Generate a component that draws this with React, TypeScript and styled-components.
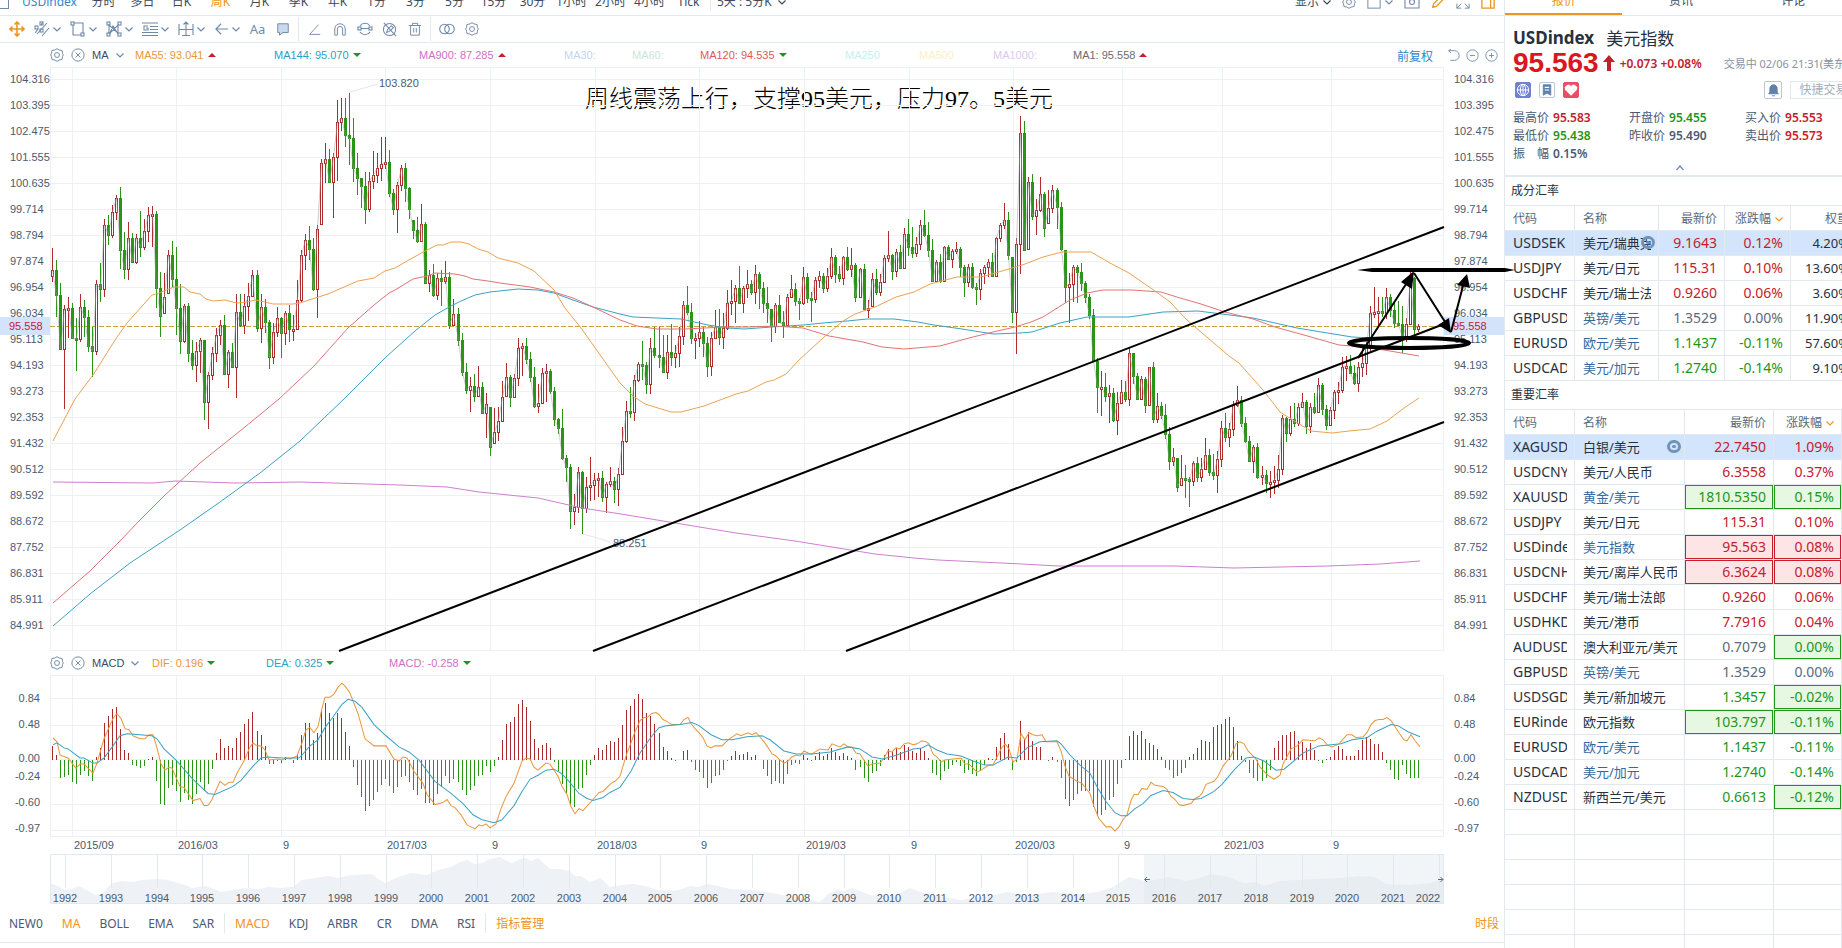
import { ReactNode } from "react";
import styled, { createGlobalStyle, css } from "styled-components";

const GlobalStyle = createGlobalStyle`
    * {
        box-sizing: border-box;
    }
    body {
        margin: 0;
        background: #FFFFFF;
        color: #4a5a70;
        font-family: "Noto Sans", "Noto Sans CJK SC", sans-serif;
        font-size: 12px;
        overflow: hidden;
    }
    button {
        margin: 0;
        padding: 0;
        border: 0;
        background: none;
        color: inherit;
        font: inherit;
        cursor: pointer;
    }
`;

const ORANGE = "#ee9420";
const RED = "#c4202c";
const GREEN = "#1f961a";
const LINE = "#e3e8ee";
const ICON = "#6f8aa8";

type Tone = "up" | "down" | "flat";
const toneColor = { up: RED, down: GREEN, flat: "#5a6a7c" };

const Page = styled.div`
    display: flex;
    width: 100%;
    height: 100vh;
    overflow: hidden;
`;

const Main = styled.main`
    flex: 1;
    min-width: 0;
    display: flex;
    flex-direction: column;
`;

const PeriodBar = styled.nav`
    display: flex;
    align-items: flex-end;
    justify-content: space-between;
    height: 16px;
    padding-bottom: 5px;
    border-bottom: 1px solid ${LINE};
    overflow: hidden;
`;

const Periods = styled.div`
    display: flex;
    align-items: center;
    height: 16px;
`;

const Window = styled.span`
    width: 9px;
    height: 14px;
    border: solid ${ICON};
    border-width: 0 1px 1px 0;
`;

const Symbol = styled.button`
    width: 75px;
    padding-left: 6px;
    color: #2f86cf;
    line-height: 16px;
`;

const Period = styled.button<{ $active?: boolean }>`
    flex: 0 0 39px;
    text-align: center;
    white-space: nowrap;
    line-height: 16px;
    color: ${p => p.$active ? ORANGE : "#3d4a5c"};
`;

const PeriodExtra = styled.button`
    display: flex;
    align-items: center;
    gap: 6px;
    margin-left: 2px;
    padding-left: 6px;
    border-left: 1px solid ${LINE};
    line-height: 16px;
    color: #3d4a5c;
`;

const ViewTools = styled.div`
    display: flex;
    align-items: center;
    height: 16px;
    gap: 11px;
    padding-right: 9px;
    color: ${ICON};
`;

const ViewTool = styled.button<{ $active?: boolean; $label?: boolean }>`
    display: flex;
    align-items: center;
    gap: 4px;
    line-height: 16px;
    color: ${p => p.$active ? ORANGE : p.$label ? "#3d4a5c" : ICON};
`;

const ToolBar = styled.div`
    display: flex;
    align-items: center;
    height: 27px;
    padding-left: 4px;
    border-bottom: 1px solid ${LINE};
    color: ${ICON};
`;

const Tool = styled.button<{ $wide?: boolean; $active?: boolean }>`
    display: flex;
    align-items: center;
    justify-content: center;
    gap: 3px;
    flex: 0 0 ${p => p.$wide ? 36 : 25}px;
    height: 24px;
    font-size: 13px;
    color: ${p => p.$active ? ORANGE : ICON};
`;

const ToolDivider = styled.span`
    width: 1px;
    height: 24px;
    margin: 0 3px;
    background: ${LINE};
`;

const IndicatorRow = styled.div`
    display: flex;
    align-items: center;
    height: 24px;
    padding: 0 6px 0 50px;
    font: 11px "Liberation Sans", sans-serif;
    color: ${ICON};
`;

const IndicatorHead = styled.div<{ $width: number }>`
    display: flex;
    align-items: center;
    gap: 7px;
    width: ${p => p.$width}px;
    > span {
        color: #3d4a5c;
    }
    > button {
        display: flex;
    }
`;

const Reading = styled.span<{ $width: number; $color: string }>`
    display: flex;
    align-items: center;
    gap: 4px;
    flex: 0 0 ${p => p.$width}px;
    white-space: nowrap;
    color: ${p => p.$color};
`;

const Arrow = styled.i<{ $up?: boolean }>`
    border: 4px solid transparent;
    ${p => p.$up
        ? css`border-top: 0; border-bottom-color: ${RED};`
        : css`border-bottom: 0; border-top-color: ${GREEN};`}
`;

const RowEnd = styled.div`
    display: flex;
    align-items: center;
    gap: 6px;
    margin-left: auto;
    > a {
        margin-right: 8px;
        color: #2f86cf;
        font-family: "Noto Sans CJK SC", sans-serif;
        font-size: 12px;
        text-decoration: none;
    }
    > button {
        display: flex;
    }
`;

const ChartRow = styled.div<{ $height: number }>`
    display: grid;
    grid-template-columns: 50px 1fr 60px;
    height: ${p => p.$height}px;
    font: 11px "Liberation Sans", sans-serif;
    color: #4a5a70;
`;

const Canvas = styled.svg`
    position: relative;
    z-index: 2;
    display: block;
    width: 100%;
    height: 100%;
    overflow: visible;
    pointer-events: none;
`;

const Axis = styled.div<{ $right?: boolean; $top: number }>`
    position: relative;
    display: flex;
    flex-direction: column;
    padding-top: ${p => p.$top}px;
    text-align: ${p => p.$right ? "left" : "right"};
`;

const AxisLabel = styled.span<{ $height: number }>`
    height: ${p => p.$height}px;
    padding: 0 10px;
    line-height: 18px;
`;

const LastPrice = styled.b`
    position: absolute;
    top: 250px;
    left: 0;
    right: 0;
    padding: 0 9px;
    background: #d2e3fb;
    color: ${RED};
    font-weight: normal;
    line-height: 18px;
`;

const PlotWrap = styled.div`
    position: relative;
`;

const Note = styled.p`
    position: absolute;
    top: 14px;
    left: 535px;
    margin: 0;
    white-space: nowrap;
    font: 300 24px/36px "Liberation Serif", "Noto Sans CJK SC", serif;
    color: #000000;
`;

const Dates = styled.div`
    position: relative;
    height: 19px;
    margin: 0 60px 0 50px;
    font: 11px/18px "Liberation Sans", sans-serif;
`;

const Tick = styled.span<{ $center?: boolean }>`
    position: absolute;
    bottom: 0;
    transform: ${p => p.$center ? "translateX(-50%)" : "none"};
    padding-left: ${p => p.$center ? 0 : 2}px;
`;

const Overview = styled.div`
    position: relative;
    height: 50px;
    margin: 0 60px 0 50px;
    font: 11px/12px "Liberation Sans", sans-serif;
`;

const StudyTabs = styled.nav`
    display: flex;
    align-items: center;
    gap: 19px;
    height: 39px;
    padding: 0 5px 0 9px;
    border-bottom: 1px solid ${LINE};
    > button:last-child {
        margin-left: auto;
    }
`;

const StudyTab = styled.button<{ $active?: boolean }>`
    color: ${p => p.$active ? ORANGE : "#4a5a70"};
`;

const TabDivider = styled.span`
    width: 1px;
    height: 20px;
    margin: 0 -9px;
    background: ${LINE};
`;

const Side = styled.aside`
    flex: 0 0 338px;
    display: flex;
    flex-direction: column;
    border-left: 1px solid ${LINE};
    overflow: hidden;
    > * {
        width: 352px;
        flex-shrink: 0;
    }
`;

const SideTabs = styled.nav`
    display: flex;
    align-items: flex-end;
    height: 16px;
    border-bottom: 1px solid ${LINE};
    overflow: hidden;
`;

const SideTab = styled.button<{ $active?: boolean }>`
    flex: 1;
    height: 22px;
    padding-bottom: 4px;
    line-height: 16px;
    color: ${p => p.$active ? ORANGE : "#3d4a5c"};
    border-bottom: 2px solid ${p => p.$active ? ORANGE : "transparent"};
`;

const Dot = styled.i`
    display: inline-block;
    width: 4px;
    height: 4px;
    margin-left: 6px;
    vertical-align: 5px;
    border-radius: 50%;
    background: ${RED};
`;

const Quote = styled.section`
    height: 161px;
    padding: 9px 0 0 8px;
    border-bottom: 2px solid ${LINE};
`;

const QuoteTitle = styled.h1`
    display: flex;
    align-items: center;
    gap: 12px;
    margin: 0;
    height: 24px;
    font-size: 17px;
    color: #263140;
    > span {
        font-weight: 400;
    }
`;

const QuotePrice = styled.div`
    display: flex;
    align-items: center;
    height: 28px;
    color: ${RED};
    font-weight: 600;
    white-space: nowrap;
    > strong {
        color: #d8181e;
        font: bold 28px/28px "Liberation Sans", sans-serif;
    }
    > svg {
        margin: 0 5px 0 4px;
    }
    > small {
        margin-left: 22px;
        font-size: 11px;
        font-weight: 400;
        color: #8593a5;
    }
`;

const QuoteTools = styled.div`
    display: flex;
    align-items: center;
    gap: 8px;
    height: 26px;
    padding-left: 2px;
`;

const Chip = styled.button<{ $fill?: string }>`
    display: flex;
    align-items: center;
    justify-content: center;
    width: 16px;
    height: 16px;
    border-radius: 2px;
    border: 1px solid ${p => p.$fill ?? "#b9c7d8"};
    background: ${p => p.$fill ?? "#FFFFFF"};
    color: ${p => p.$fill ? "#FFFFFF" : "#5f80a8"};
    > svg {
        flex-shrink: 0;
    }
`;

const Bell = styled(Chip)`
    width: 18px;
    height: 18px;
    margin-left: auto;
`;

const Trade = styled.button`
    width: 67px;
    height: 18px;
    border: 1px solid ${LINE};
    color: #a4aebb;
    line-height: 16px;
`;

const Stats = styled.dl`
    display: grid;
    grid-template-columns: repeat(3, 116px);
    grid-auto-rows: 18px;
    margin: 6px 0 0;
    line-height: 18px;
    > div {
        display: flex;
        gap: 4px;
    }
    dt {
        white-space: pre;
    }
    dd {
        margin: 0;
        font-weight: 600;
    }
`;

const StatValue = styled.dd<{ $color: string }>`
    color: ${p => p.$color};
`;

const Fold = styled.button`
    display: block;
    margin: 0 auto;
    height: 10px;
    padding-right: 10px;
    color: ${ICON};
    > svg {
        display: block;
    }
`;

const SectionTitle = styled.h2`
    margin: 0;
    padding-left: 6px;
    height: 28px;
    font-size: 12px;
    font-weight: 400;
    line-height: 28px;
    color: #263140;
`;

const Table = styled.table`
    table-layout: fixed;
    border-collapse: separate;
    border-spacing: 0;
    color: #263140;
    font-size: 14px;
    border-top: 1px solid ${LINE};
`;

const Th = styled.th<{ $right?: boolean }>`
    height: 25px;
    padding: 0 7px 0 8px;
    border: solid ${LINE};
    border-width: 0 1px 1px 0;
    font-size: 12px;
    font-weight: 400;
    color: #5a6a7c;
    text-align: ${p => p.$right ? "right" : "left"};
    white-space: nowrap;
    > svg {
        margin-left: 4px;
        color: ${ORANGE};
    }
`;

const Tr = styled.tr<{ $active?: boolean }>`
    background: ${p => p.$active ? "#d2e5fc" : "transparent"};
`;

const Td = styled.td<{ $right?: boolean; $color?: string; $box?: string; $small?: boolean }>`
    position: relative;
    height: 25px;
    padding: 0 7px 0 8px;
    border: solid ${LINE};
    border-width: 0 1px 1px 0;
    line-height: 20px;
    color: ${p => p.$color ?? "inherit"};
    text-align: ${p => p.$right ? "right" : "left"};
    font-size: ${p => p.$small ? 13 : 14}px;
    ${p => p.$box && css`
        background: ${p.$box === GREEN ? "#e6f8e2" : "#fde5e5"};
        box-shadow: inset 0 0 0 1px ${p.$box};
    `}
`;

const Clip = styled.div`
    overflow: hidden;
    white-space: nowrap;
`;

const Eye = styled.span`
    position: absolute;
    top: 5px;
    right: 3px;
    width: 14px;
    height: 13px;
    border: 3px solid #7292b8;
    border-radius: 7px;
    &::after {
        content: "";
        position: absolute;
        top: 2px;
        left: 2px;
        width: 4px;
        height: 3px;
        border-radius: 2px;
        background: #7292b8;
    }
`;

const Glyph = ({ size = 14, children }: { size?: number; children: ReactNode }) => (
    <svg width={size} height={size} viewBox="0 0 16 16" fill="none" stroke="currentColor" strokeWidth="1.1">{children}</svg>
);
const Chevron = ({ up }: { up?: boolean }) => (
    <svg width="8" height="8" viewBox="0 0 8 8" fill="none" stroke="currentColor" strokeWidth="1.2">
        <path d={up ? "M0.5 6 L4 2 L7.5 6" : "M0.5 2.5 L4 6 L7.5 2.5"} />
    </svg>
);
const Gear = () => (
    <Glyph>
        <path d="M5.5 2.3 L8 0.8 L10.5 2.3 L13.8 2.8 L14.2 6 L15.2 8 L14.2 10 L13.8 13.2 L10.5 13.7 L8 15.2 L5.5 13.7 L2.2 13.2 L1.8 10 L0.8 8 L1.8 6 L2.2 2.8 Z" />
        <circle cx="8" cy="8" r="2.8" />
    </Glyph>
);
const CloseRound = () => <Glyph><circle cx="8" cy="8" r="7" /><path d="M5.3 5.3 L10.7 10.7 M10.7 5.3 L5.3 10.7" /></Glyph>;

const periods = ["分时", "多日", "日K", "周K", "月K", "季K", "年K", "1分", "3分", "5分", "15分", "30分", "1小时", "2小时", "4小时", "Tick"];

const drawTools: { name: string; icon: ReactNode }[] = [
    { name: "平行线", icon: <Glyph size={16}><path d="M3 13 L13 2 M8 15 L15 7 M1 12 L4 8 M7 4 L9 1" /><rect x="1" y="5" width="3" height="3" /><rect x="6" y="1" width="3" height="3" /><rect x="6" y="8" width="3" height="3" /></Glyph> },
    { name: "矩形", icon: <Glyph size={16}><path d="M4 2 H13 V12 M11 14 H3 V4" /><rect x="1" y="1" width="3" height="3" /><rect x="11" y="12" width="3" height="3" /></Glyph> },
    { name: "形态", icon: <Glyph size={16}><path d="M3 13 V4 L12 12 V4 L3 13 M4 12 L7 5 L12 13" /><rect x="1" y="1" width="3" height="3" /><rect x="12" y="1" width="3" height="3" /><rect x="1" y="12" width="3" height="3" /><rect x="12" y="12" width="3" height="3" /></Glyph> },
    { name: "黄金分割", icon: <Glyph size={16}><path d="M0 2 H16 M8 5.5 H16 M8 8.5 H16 M0 11.500 H16 M0 14.500 H16 M6 5 H2 V9 H6 V7 H4" /></Glyph> },
    { name: "测量", icon: <Glyph size={16}><path d="M1 3 V14 M15 3 V14 M1 8.5 H15 M8 1 V15 M5.500 3.500 L8 1 L10.500 3.500 M4 14.500 H12" /></Glyph> },
    { name: "箭头", icon: <Glyph size={14}><path d="M15 8 H1 M7 2 L1 8 L7 14" strokeWidth="1.3" /></Glyph> },
];

const maReadings = [
    { text: "MA55: 93.041", color: "#e8963c", width: 139, up: true },
    { text: "MA144: 95.070", color: "#2b9fc4", width: 145, up: false },
    { text: "MA900: 87.285", color: "#d06fc8", width: 145, up: true },
    { text: "MA30:", color: "#c3d5ee", width: 68 },
    { text: "MA60:", color: "#c9e6d6", width: 68 },
    { text: "MA120: 94.535", color: "#e25757", width: 145, up: false },
    { text: "MA250", color: "#c4f0f2", width: 74 },
    { text: "MA500", color: "#faeecb", width: 74 },
    { text: "MA1000:", color: "#dccaf0", width: 80 },
    { text: "MA1: 95.558", color: "#6b6b6b", width: 90, up: true },
];
const macdReadings = [
    { text: "DIF: 0.196", color: "#e8963c", width: 114, up: false },
    { text: "DEA: 0.325", color: "#2b9fc4", width: 123, up: false },
    { text: "MACD: -0.258", color: "#d06fc8", width: 120, up: false },
];

const prices = ["104.316", "103.395", "102.475", "101.555", "100.635", "99.714", "98.794", "97.874", "96.954", "96.034", "95.113",
    "94.193", "93.273", "92.353", "91.432", "90.512", "89.592", "88.672", "87.752", "86.831", "85.911", "84.991"];

const dates: [number, string][] = [[72, "2015/09"], [176, "2016/03"], [281, "9"], [385, "2017/03"], [490, "9"], [595, "2018/03"],
    [699, "9"], [804, "2019/03"], [909, "9"], [1013, "2020/03"], [1122, "9"], [1222, "2021/03"], [1331, "9"]];

// gridline position, label, distance to the next label
const macdLevels: [number, string, number][] = [[698, "0.84", 26], [724, "0.48", 34], [758, "0.00", 18], [776, "-0.24", 26], [802, "-0.60", 26], [828, "-0.97", 18]];

// chart coordinates: x runs 50..1444, y runs down the window
const LEFT = 50;
const WIDTH = 1394;
const weekX = (i: number) => Math.floor(52 + i * 4.02) + 0.5;

// weekly bars as "close high low", three units to a pixel, each block with its own origin
const blocks: { origin: number; bars: string }[] = [
    {
        origin: 180,
        bars: `630 564 665,705 600 770,866 670 866,748 735 1047,744 712 833,833 730 838,838 775 932,742 703 845,770 720 832,857 750 875,
872 800 950,672 660 886,686 610 725,496 478 710,525 465 556,455 436 534,415 406 480,570 382 628,626 516 658,533 485 660,
607 520 610,533 522 612,562 453 590,512 478 570,465 442 545,463 438 562,683 453 743,767 637 830,712 640 760,585 570 700,
658 543 680,745 560 825,842 672 883,738 732 848,880 730 905,916 840 930,872 845 965,840 833 940,1025 840 1080,945 937 1107,
880 862 960,825 803 905,795 780 855,943 765 945,875 870 983,920 850 925,757 703 1015,795 703 800,738 703 822,708 668 783,
645 630 712,805 630 815,740 703 848,785 717 820,890 780 926,815 790 913,775 742 832,818 770 893,760 752 855,806 735 846,
808 765 843,720 660 808,585 570 725,540 522 630,566 498 600,688 535 692,508 495 773,310 298 493,298 250 370,366 267 370,
292 280 473,185 120 362,173 114 213,225 114 262,235 98 316,323 173 366,355 278 404,378 355 445,448 337 491,362 337 455,
345 274 388,325 278 368,312 232 364,307 232 328,398 270 412,446 388 464,375 365 520,325 316 392,383 310 425,446 382 478,
510 480 536,544 470 548,492 433 545,668 487 672,645 630 695,706 612 710,655 640 720,662 630 737,650 603 672,795 637 808,
762 717 797,840 745 858`,
    },
    {
        origin: 750,
        bars: `365 248 378,420 338 433,407 382 485,438 372 455,412 348 442,488 395 492,462 430 565,590 470 617,545 475 580,512 470 573,
440 392 515,380 340 437,440 375 470,385 372 443,293 265 408,287 278 378,328 265 343,380 305 395,468 350 473,460 402 490,
370 355 460,362 343 455,422 357 433,508 410 527,533 505 553,625 478 630,650 615 695,782 642 836,770 732 825,665 652 788,
775 663 852,710 680 790,705 622 752,690 670 750,685 668 740,742 662 755,702 697 790,692 650 712,718 680 758,672 655 768,
572 532 675,484 453 578,487 412 503,390 375 512,342 335 397,345 272 390,402 335 432,295 263 433,316 230 325,320 230 355,
365 255 370,305 255 388,322 223 348,308 285 355,258 232 350,165 153 285,185 108 195,265 160 283,265 250 327,245 213 290,
278 232 320,348 262 380,265 245 378,232 180 265,260 178 285,235 190 297`,
    },
    {
        origin: 540,
        bars: `368 330 450,362 300 405,325 315 430,368 258 372,325 318 400,312 270 355,335 300 345,283 255 372,325 275 388,370 307 400,
385 322 430,437 388 485,375 370 460,425 345 430,435 392 475,350 343 438,328 285 350,362 310 378,370 355 420,290 260 375,
355 280 370,358 335 425,300 290 370,288 272 325,325 280 338,287 265 337,230 205 297,282 225 308,293 258 305,232 227 315,
268 202 273,255 205 290,352 250 365,268 265 355,387 252 390,385 360 415,297 280 378,335 268 345,305 282 348,233 225 308,
225 153 245,272 222 300,215 207 292,263 195 268,162 143 268,200 118 227,218 140 235,193 170 232,135 120 210,165 90 172,
210 127 230,302 178 305,247 240 305,303 222 308,200 197 305,237 195 240,212 207 263,208 187 223,260 200 290,307 255 352,
262 253 320,322 250 327,328 310 374,280 268 360,262 255 312,245 238 290,287 220 290,175 170 290,135 130 185,120 68 148,
225 95 240,395 232 428`,
    },
    {
        origin: 300,
        bars: `432 415 762,98 48 522,450 63 453,245 232 448,347 222 360,330 297 405,282 232 335,385 275 410,325 270 370,270 255 340,
322 263 388,447 305 453,560 450 608,552 520 670,500 495 605,515 495 610,548 490 573,590 542 608,645 582 658,782 627 787,
860 775 938,862 812 948,888 818 905,880 855 970,960 865 965,910 875 1005,875 840 912,898 843 905,760 745 918,828 760 852,
897 820 900,838 828 900,915 832 940,802 800 917,957 787 968,918 880 968,945 905 957,1002 912 1018,1083 980 1110,1070 1045 1098,
1160 1075 1175,1133 1065 1155,1137 1095 1195,1143 1130 1220,1088 1082 1158,1132 1070 1145,1107 1075 1145,1065 1015 1108,1115 1048 1128,1125 1063 1140,
1078 1052 1180,985 962 1100,1010 940 1025,988 970 1042,915 903 1008,900 857 922,968 888 982,1022 952 1030,1082 1008 1085,1042 1035 1118,
1130 1030 1138,1125 1098 1155,1150 1110 1180,1147 1112 1195,1140 1098 1182,1108 1065 1165,955 945 1125,998 950 1025,958 918 1007,970 908 982,
920 908 978,905 880 925,977 900 1002,920 910 1000,937 880 943,855 833 940,928 850 945,975 915 990,930 920 975,875 870 958,
870 845 912,800 770 880,797 768 842,818 765 820,848 795 855,800 787 875,790 735 832,738 725 825,640 618 755,635 560 655,
632 590 680,638 590 650,590 565 657,630 583 650,670 608 683,672 603 675,715 618 760,672 655 725,535 517 675,687 530 705,679 672 695`,
    },
];

const bars = blocks.flatMap(b => b.bars.split(",").map(t => t.trim().split(" ").map(v => Math.round((Number(v) + b.origin) / 3))));

// histogram tips, same units, measured around the zero line
const histogram: { zero: number; tips: string }[] = [
    {
        zero: 358,
        tips: `315 343 413 410 402 425 431 402 390 407 420 350 322 247 227 209 202 265 328 337 373 375 383 375 354 348 422 486 491 443
434 452 482 456 476 486 461 423 452 431 386 337 295 322 316 323 292 273 250 235 217 271 284 317 371 371 361 368 350 358
368 340 283 247 247 297 277 212 190 220 232 220 232 273 316 380 434 467 509 494 476 455 434 416 437 458 440 410 407 425
449 464 446 485 485 491 461 440 407 428 416 425 449 464 449 437 407 402 377 395 377 348 297 250 243 228 193 181 202 240
295 323 313 307 323 365 392 431 461 491 497 446 443 404 374`,
    },
    {
        zero: 298,
        tips: `283 262 268 253 241 243 232 193 151 139 118 103 118 160 166 190 217 259 271 292 302 298 271 268 305 329 335 353 383 368
347 344 329 302 287 271 282 280 274 290 283 298 326 347 371 362 367 371 341 314 308 311 283 293 301 287 275 286 281 262
274 286 277 286 292 329 320 353 365 338 332 317 283 265 274 262 275 253 260 271 277 262 271 292 338 344 359 332 326 314
305 317 338 329 341 347 332 314 292 296 259 232 217 250 329 305 181 235 214 241 259 259 298 301 290 304 353 413`,
    },
    {
        zero: 358,
        tips: `494 476 461 452 452 452 497 524 521 505 476 467 431 383 354 286 271 283 271 295 307 313 325 349 383 389 413 407 396 383
349 340 322 298 300 304 259 253 250 235 229 259 301 345 365 398 413 422 420 411 389 322 301 283 283 274 271 301 304 322
307 328 362 368 354 348 328 316 325 346 346 346 328 298 289 295 310 310 335 368 389 416 419 374 401 413 413 413`,
    },
];
const histBars = histogram.flatMap(h => h.tips.split(/\s+/).map(t => Math.round((h.zero - Number(t)) / 3))).slice(0, 341);

const ma55 = "53,441 75,399 93,375 117,337 127,323 152,295 159,293 174,287 184,287 190,292 200,294 206,299 213,301 225,300 237,303 247,302 255,300 265,302 273,304 293,304 300,303 312,299 328,294 344,287 358,281 374,278 385,271 395,268 407,261 427,250 437,245 443,245 451,242 461,242 469,244 478,249 488,252 498,258 518,263 534,271 554,290 565,308 581,328 620,383 633,396 645,404 671,412 681,412 704,406 736,394 748,391 766,382 774,380 786,374 799,360 823,338 843,321 855,314 875,307 896,297 914,292 930,284 957,277 981,277 1009,269 1025,264 1043,257 1062,252 1091,252 1110,263 1129,273 1155,291 1170,302 1187,320 1229,356 1239,363 1263,390 1280,412 1296,422 1311,431 1332,433 1349,431 1370,429 1387,421 1404,408 1419,398";
const ma120 = "53,603 90,571 120,541 140,520 165,495 200,463 240,431 279,399 314,366 348,328 374,305 389,293 395,290 413,279 427,276 435,273 455,274 465,276 473,279 488,281 500,283 530,287 554,292 573,298 593,307 620,320 637,326 657,329 685,329 724,327 748,327 774,326 803,328 829,336 863,342 882,347 904,349 940,346 969,338 993,332 1015,327 1031,322 1043,317 1070,300 1087,293 1103,290 1132,290 1161,292 1180,298 1201,304 1225,312 1253,319 1275,327 1304,335 1325,341 1339,345 1366,347 1390,351 1419,356";
const ma144 = "53,626 90,594 130,563 180,530 220,502 260,473 300,441 344,399 386,357 415,331 435,315 451,306 461,301 475,295 490,292 518,289 538,290 554,293 573,300 593,307 620,314 633,317 681,319 708,325 728,328 744,329 772,327 803,325 823,323 847,321 867,319 894,319 918,322 934,325 962,329 993,334 1020,333 1032,332 1060,323 1087,317 1129,317 1163,312 1198,311 1222,314 1253,318 1297,328 1352,337 1371,338";
const ma900 = "53,482 153,483 175,481 235,483 300,482 400,485 447,487 479,492 538,498 582,508 621,514 669,522 736,533 795,541 875,554 914,558 938,560 1022,564 1058,566 1175,566 1234,568 1328,566 1380,564 1420,561";

const dif = "53,737 57,741 60,754 68,757 76,767 80,763 84,763 93,772 97,762 104,738 113,718 117,713 121,718 125,728 129,729 133,735 140,738 145,738 149,734 153,734 157,747 161,763 165,769 169,766 172,767 180,785 184,786 193,799 200,797 204,804 208,804 212,798 220,780 225,784 229,781 233,781 237,772 245,758 249,748 253,742 257,745 261,745 265,749 269,759 278,758 282,759 286,757 290,758 297,755 302,742 306,729 310,727 314,732 318,726 322,708 325,697 330,697 334,694 338,687 342,683 346,687 350,693 358,713 365,738 374,745 386,745 394,758 399,760 403,756 407,757 414,770 423,782 427,793 435,803 443,801 447,798 451,804 455,806 461,813 467,823 475,827 479,823 482,824 486,822 490,826 496,822 501,807 506,795 514,782 522,760 526,757 530,758 534,766 538,769 546,762 550,763 558,775 562,785 567,793 571,805 575,812 579,807 583,809 593,798 599,791 603,790 611,782 615,780 620,775 623,765 627,752 631,742 635,731 640,720 644,717 647,717 652,713 656,712 659,714 663,719 667,721 672,724 680,724 684,719 688,717 691,723 695,728 699,732 703,737 707,745 711,747 715,745 722,745 728,739 737,733 741,735 748,732 752,734 756,732 760,736 767,745 772,753 776,755 780,759 784,762 788,760 792,756 796,754 800,755 804,750 808,752 812,753 820,748 828,749 832,743 840,746 844,743 848,746 852,746 856,752 860,753 868,765 872,763 880,762 884,757 888,750 892,751 896,747 900,748 904,743 909,742 913,744 917,743 922,740 926,741 929,743 933,753 937,756 941,761 945,759 953,758 961,757 965,763 969,763 977,771 981,769 989,764 993,764 1001,748 1005,743 1009,748 1013,761 1017,758 1021,733 1025,739 1029,732 1033,734 1037,735 1042,734 1046,741 1057,741 1061,750 1065,765 1069,775 1077,780 1082,782 1090,792 1094,805 1099,817 1106,825 1111,825 1115,829 1119,825 1123,818 1127,813 1131,799 1134,793 1138,793 1142,787 1147,788 1151,781 1155,784 1163,785 1167,788 1171,795 1175,798 1179,803 1183,804 1191,802 1195,797 1199,795 1202,792 1206,783 1214,780 1218,775 1223,765 1231,755 1236,743 1240,741 1244,743 1248,750 1256,758 1260,766 1268,774 1274,778 1280,774 1283,763 1291,748 1297,745 1303,739 1315,740 1319,737 1323,739 1327,744 1332,746 1339,743 1347,734 1352,734 1356,737 1363,736 1367,732 1371,724 1375,720 1379,719 1383,719 1387,717 1391,720 1399,732 1404,739 1407,740 1411,734 1415,740 1420,746";
const dea = "53,744 57,742 64,747 68,748 80,757 84,757 93,762 97,762 104,757 113,745 120,735 127,733 140,734 152,735 157,738 164,748 176,759 193,778 208,792 215,793 233,785 241,779 253,765 261,757 267,756 283,757 299,757 302,754 310,745 318,739 325,727 334,715 342,704 348,699 355,701 362,707 374,724 386,735 399,746 409,751 419,759 435,780 451,792 463,802 473,813 482,818 494,821 502,818 514,804 522,790 530,778 538,774 546,769 554,768 561,772 569,780 579,792 587,797 593,799 603,796 610,791 620,786 631,770 640,752 652,735 659,727 667,725 680,724 692,722 699,725 711,734 722,739 732,739 747,736 762,735 770,739 784,750 796,753 812,753 830,751 848,746 860,748 872,756 883,758 897,754 913,748 922,747 928,744 937,749 947,753 961,755 973,760 985,764 993,764 1008,756 1017,757 1027,747 1040,741 1057,740 1061,743 1070,754 1080,764 1090,772 1098,787 1106,800 1115,811 1121,814 1127,814 1135,807 1143,802 1151,794 1163,789 1173,791 1183,797 1193,798 1201,797 1214,790 1222,783 1234,769 1246,757 1254,756 1264,760 1276,769 1284,768 1295,759 1303,752 1319,745 1331,744 1341,743 1352,739 1367,737 1376,731 1391,724 1398,725 1408,731 1420,736";
const history = "50,883 58,886 65,890 72,889 79,886 87,890 95,895 103,893 108,887 113,883 122,881 134,882 142,880 158,879 168,880 178,883 185,885 192,888 206,886 221,892 233,890 245,888 258,889 269,887 280,888 293,887 302,880 315,878 328,876 338,878 350,875 372,874 378,879 385,883 398,877 411,873 427,875 438,870 451,867 460,862 467,860 474,864 482,863 490,859 500,857 505,860 512,863 520,859 526,858 531,861 538,858 550,869 560,869 569,871 575,876 581,876 590,882 600,878 610,887 622,885 633,884 645,886 657,890 673,891 682,889 690,886 698,887 707,884 718,886 730,889 750,890 773,893 793,897 820,902 828,894 837,890 845,891 852,888 870,895 890,896 900,893 910,888 923,893 960,900 990,896 1007,892 1027,895 1053,892 1080,894 1098,892 1113,887 1129,877 1145,881 1156,880 1169,877 1185,881 1200,878 1210,874 1228,877 1244,883 1256,882 1264,886 1280,881 1315,879 1340,878 1359,876 1374,877 1386,884 1410,885 1430,883 1444,879";

const years = Array.from({ length: 31 }, (_, i) => ({ year: 1992 + i, x: Math.round(65 + i * 45.8) }));
const percent = (x: number) => `${((x - LEFT) / WIDTH) * 100}%`;

type Rate = { code: string; name: string; price: string; change: string; tone: Tone; priceTone?: Tone; own?: boolean; weight?: string; box?: "both" | "change"; };

const basket: Rate[] = [
    { code: "USDSEK", name: "美元/瑞典克", price: "9.1643", change: "0.12%", tone: "up", weight: "4.20%" },
    { code: "USDJPY", name: "美元/日元", price: "115.31", change: "0.10%", tone: "up", weight: "13.60%" },
    { code: "USDCHF", name: "美元/瑞士法郎", price: "0.9260", change: "0.06%", tone: "up", weight: "3.60%" },
    { code: "GBPUSD", name: "英镑/美元", price: "1.3529", change: "0.00%", tone: "flat", weight: "11.90%", own: true },
    { code: "EURUSD", name: "欧元/美元", price: "1.1437", change: "-0.11%", tone: "down", weight: "57.60%", own: true },
    { code: "USDCAD", name: "美元/加元", price: "1.2740", change: "-0.14%", tone: "down", weight: "9.10%", own: true },
];

const majors: Rate[] = [
    { code: "XAGUSD", name: "白银/美元", price: "22.7450", change: "1.09%", tone: "up" },
    { code: "USDCNY", name: "美元/人民币", price: "6.3558", change: "0.37%", tone: "up" },
    { code: "XAUUSD", name: "黄金/美元", price: "1810.5350", change: "0.15%", tone: "down", own: true, box: "both" },
    { code: "USDJPY", name: "美元/日元", price: "115.31", change: "0.10%", tone: "up" },
    { code: "USDindex", name: "美元指数", price: "95.563", change: "0.08%", tone: "up", own: true, box: "both" },
    { code: "USDCNH", name: "美元/离岸人民币", price: "6.3624", change: "0.08%", tone: "up", box: "both" },
    { code: "USDCHF", name: "美元/瑞士法郎", price: "0.9260", change: "0.06%", tone: "up" },
    { code: "USDHKD", name: "美元/港币", price: "7.7916", change: "0.04%", tone: "up" },
    { code: "AUDUSD", name: "澳大利亚元/美元", price: "0.7079", change: "0.00%", tone: "down", priceTone: "flat", box: "change" },
    { code: "GBPUSD", name: "英镑/美元", price: "1.3529", change: "0.00%", tone: "flat", own: true },
    { code: "USDSGD", name: "美元/新加坡元", price: "1.3457", change: "-0.02%", tone: "down", box: "change" },
    { code: "EURindex", name: "欧元指数", price: "103.797", change: "-0.11%", tone: "down", box: "both" },
    { code: "EURUSD", name: "欧元/美元", price: "1.1437", change: "-0.11%", tone: "down", own: true },
    { code: "USDCAD", name: "美元/加元", price: "1.2740", change: "-0.14%", tone: "down", own: true },
    { code: "NZDUSD", name: "新西兰元/美元", price: "0.6613", change: "-0.12%", tone: "down", box: "change" },
];

const stats: [string, string, string][] = [
    ["最高价", "95.583", RED], ["开盘价", "95.455", GREEN], ["买入价", "95.553", RED],
    ["最低价", "95.438", GREEN], ["昨收价", "95.490", "#4a5a70"], ["卖出价", "95.573", RED],
    ["振　幅", "0.15%", "#4a5a70"],
];

const PriceAxis = ({ right }: { right?: boolean }) => (
    <Axis $right={right} $top={3}>
        {prices.map(p => <AxisLabel key={p} $height={26}>{p}</AxisLabel>)}
        <LastPrice>95.558</LastPrice>
    </Axis>
);

const MacdAxis = ({ right }: { right?: boolean }) => (
    <Axis $right={right} $top={14}>
        {macdLevels.map(([y, label, height]) => <AxisLabel key={y} $height={height}>{label}</AxisLabel>)}
    </Axis>
);

const Candles = () => (
    <g shapeRendering="crispEdges">
        {bars.map(([close, high, low], i) => {
            const open = i === 0 ? close + 6 : bars[i - 1][0];
            const x = weekX(i);
            const up = close <= open;
            const top = Math.max(Math.min(open, close), high);
            const height = Math.max(Math.min(Math.max(open, close), low) - top, 2);
            return (
                <g key={i} stroke={up ? "#b02c2c" : "#2a9416"}>
                    <line x1={x} x2={x} y1={high} y2={low} />
                    <rect x={x - 1} y={top + 0.5} width="2" height={height} fill={up ? "#FFFFFF" : "#2a9416"} />
                </g>
            );
        })}
    </g>
);

const PriceChart = () => (
    <ChartRow $height={584}>
        <PriceAxis />
        <PlotWrap>
            <Canvas viewBox={`${LEFT} 67 ${WIDTH} 584`} preserveAspectRatio="none" fill="none">
                <g stroke="#eef1f4" shapeRendering="crispEdges">
                    <rect x="50.5" y="67.5" width="1393" height="583" />
                    {prices.map((p, i) => <line key={p} x1="50" x2="1444" y1={79.5 + i * 26} y2={79.5 + i * 26} />)}
                    {dates.map(([x]) => <line key={x} x1={x + 0.5} x2={x + 0.5} y1="67" y2="651" />)}
                </g>
                <line x1="50" x2="1444" y1="326.5" y2="326.5" stroke="#c8a040" strokeDasharray="5 2" />
                <path d="M350 92 L378 84 M583 534 L611 542" stroke="#e3e8ee" />
                <Candles />
                <polyline points={bars.map(([close], i) => `${weekX(i)},${close}`).join(" ")} stroke="#9a9a9a" strokeWidth="0.5" />
                <polyline points={ma900} stroke="#cf7fd0" />
                <polyline points={ma144} stroke="#3aa2c4" />
                <polyline points={ma120} stroke="#e07474" />
                <polyline points={ma55} stroke="#eba252" />
                <g fontSize="11" fill="#4a5a70">
                    <text x="379" y="87">103.820</text>
                    <text x="613" y="547">88.251</text>
                </g>
                <g stroke="#000000" strokeWidth="2">
                    <path d="M339 651 L1444 227 M593 651 L1444 324 M846 651 L1444 422" />
                    <path d="M1358 358 L1410 278 M1414 273 L1447 325 M1451 332 L1464 282" />
                    <ellipse cx="1409" cy="343" rx="60" ry="5" strokeWidth="4" />
                </g>
                <g fill="#000000">
                    <path d="M1357 270 L1372 268 H1505 L1515 270 L1505 272 H1372 Z" />
                    <path d="M1414 271 L1401 282 L1412 289 Z M1451 333 L1438 325 L1449 318 Z M1467 274 L1457 285 L1470 288 Z" />
                </g>
            </Canvas>
            <Note>周线震荡上行，支撑95美元，压力97。5美元</Note>
        </PlotWrap>
        <PriceAxis right />
    </ChartRow>
);

const MacdChart = () => (
    <ChartRow $height={160}>
        <MacdAxis />
        <Canvas viewBox={`${LEFT} 675 ${WIDTH} 160`} preserveAspectRatio="none" fill="none">
            <g stroke="#eef1f4" shapeRendering="crispEdges">
                <rect x="50.5" y="675.5" width="1393" height="159" />
                {macdLevels.map(([y]) => <line key={y} x1="50" x2="1444" y1={y + 0.5} y2={y + 0.5} />)}
                {dates.map(([x]) => <line key={x} x1={x + 0.5} x2={x + 0.5} y1="675" y2="835" />)}
            </g>
            <g shapeRendering="crispEdges">
                {histBars.map((h, i) => (
                    <line key={i} x1={weekX(i)} x2={weekX(i)} y1="759" y2={759 - h} stroke={h > 0 ? "#a82a2a" : "#2a9416"} />
                ))}
            </g>
            <polyline points={dif} stroke="#e8963c" />
            <polyline points={dea} stroke="#3aa2c4" />
        </Canvas>
        <MacdAxis right />
    </ChartRow>
);

const HistoryStrip = () => (
    <Overview>
        <Canvas viewBox={`${LEFT} 854 ${WIDTH} 50`} preserveAspectRatio="none" fill="none">
            <polygon points={`50,904 ${history} 1444,904`} fill="#eef2f6" />
            <rect x="1144" y="854" width="300" height="50" fill="#dfe5ec" fillOpacity="0.4" />
            <g stroke="#e3e8ee" shapeRendering="crispEdges">
                <rect x="50.5" y="854.5" width="1393" height="49" />
                {years.map(y => <line key={y.year} x1={y.x + 0.5} x2={y.x + 0.5} y1="854" y2="888" />)}
            </g>
            <path d="M1150 879.5 H1145 M1147 877 L1144.500 879.500 L1147 882 M1438 879.5 H1443 M1440.500 877 L1443 879.500 L1440.500 882" stroke="#4f7396" />
        </Canvas>
        {years.map(y => (
            <Tick key={y.year} $center style={{ left: percent(y.year === 2022 ? 1428 : y.x), zIndex: 3 }}>{y.year}</Tick>
        ))}
    </Overview>
);

const Readings = ({ items }: { items: { text: string; color: string; width: number; up?: boolean }[] }) => (
    <>
        {items.map(r => (
            <Reading key={r.text} $width={r.width} $color={r.color}>
                {r.text}
                {r.up !== undefined && <Arrow $up={r.up} />}
            </Reading>
        ))}
    </>
);

const RateRow = ({ rate, active, showWeight }: { rate: Rate; active?: boolean; showWeight?: boolean }) => {
    const color = toneColor[rate.tone];
    return (
        <Tr $active={active}>
            <Td><Clip>{rate.code}</Clip></Td>
            <Td $color={rate.own ? "#3568a0" : undefined} $small>
                <Clip>{rate.name}</Clip>
                {active && <Eye />}
            </Td>
            <Td $right $color={rate.priceTone ? toneColor[rate.priceTone] : color} $box={rate.box === "both" ? color : undefined}>{rate.price}</Td>
            <Td $right $color={color} $box={rate.box ? color : undefined}>{rate.change}</Td>
            {showWeight && <Td $right $small>{rate.weight}</Td>}
        </Tr>
    );
};

const App = () => {
    return (
        <>
            <GlobalStyle />
            <Page>
                <Main>
                    <PeriodBar>
                        <Periods>
                            <Window />
                            <Symbol>USDindex</Symbol>
                            {periods.map(p => <Period key={p} $active={p === "周K"}>{p}</Period>)}
                            <PeriodExtra>5天 : 5分K <Chevron /></PeriodExtra>
                        </Periods>
                        <ViewTools>
                            <ViewTool $label>显示 <Chevron /></ViewTool>
                            <ViewTool aria-label="设置"><Gear /></ViewTool>
                            <ViewTool aria-label="布局"><Glyph><rect x="1" y="1" width="14" height="14" /></Glyph><Chevron /></ViewTool>
                            <ViewTool aria-label="截图"><Glyph size={16}><path d="M1 3 H5 L6 1 H10 L11 3 H15 V14 H1 Z" /><circle cx="8" cy="8" r="2.500" /></Glyph></ViewTool>
                            <ViewTool $active aria-label="画线"><Glyph><path d="M2 14 L3 10 L12 1 L15 4 L6 13 Z" strokeWidth="1.500" /></Glyph></ViewTool>
                            <ViewTool aria-label="全屏"><Glyph><path d="M1 10 V15 H6 M1 15 L6 10 M15 10 V15 H10 M15 15 L10 10 M1 5 V1 H5 M15 5 V1 H11" /></Glyph></ViewTool>
                            <ViewTool $active aria-label="侧栏"><Glyph><path d="M1 1 H15 V15 H1 Z M11 1 V15" strokeWidth="1.500" /></Glyph></ViewTool>
                        </ViewTools>
                    </PeriodBar>
                    <ToolBar>
                        <Tool $active aria-label="移动">
                            <Glyph size={16}><path d="M8 1 V15 M1 8 H15 M5.500 3.500 L8 1 L10.500 3.500 M5.500 12.500 L8 15 L10.500 12.500 M3.500 5.500 L1 8 L3.500 10.500 M12.500 5.500 L15 8 L12.500 10.500" strokeWidth="1.600" /></Glyph>
                        </Tool>
                        {drawTools.map(t => <Tool key={t.name} $wide aria-label={t.name}>{t.icon}<Chevron /></Tool>)}
                        <Tool>Aa</Tool>
                        <Tool aria-label="批注"><Glyph size={14}><path d="M2 2 H14 V12 H8 L4 15 V12 H2 Z" fill="#c9d8ea" /></Glyph></Tool>
                        <ToolDivider />
                        <Tool aria-label="角度"><Glyph size={13}><path d="M13 2 L2 14 H15" /></Glyph></Tool>
                        <Tool aria-label="磁铁"><Glyph size={14}><path d="M2 15 V8 A6 6 0 0 1 14 8 V15 H11 V8 A3 3 0 0 0 5 8 V15 Z" /></Glyph></Tool>
                        <Tool aria-label="连续画线"><Glyph size={16}><rect x="1" y="6" width="3" height="3" /><rect x="12" y="6" width="3" height="3" /><path d="M4 7.500 H12 M3 5 A6 6 0 0 1 13 5 M3 11 A6 6 0 0 0 13 11" /></Glyph></Tool>
                        <Tool aria-label="隐藏"><Glyph size={15}><circle cx="8" cy="8" r="6.500" /><path d="M2 1 L15 15 M5 11 L6 8 L10 4 L12 6 L8 10 Z" /></Glyph></Tool>
                        <Tool aria-label="删除"><Glyph size={14}><path d="M1 4 H15 M5 4 V1.500 H11 V4 M3 4 V15 H13 V4 M6.500 7 V12 M9.500 7 V12" /></Glyph></Tool>
                        <ToolDivider />
                        <Tool aria-label="叠加"><Glyph size={16}><circle cx="5.500" cy="8" r="4.800" /><circle cx="10.500" cy="8" r="4.800" /></Glyph></Tool>
                        <Tool aria-label="设置"><Gear /></Tool>
                    </ToolBar>

                    <IndicatorRow>
                        <IndicatorHead $width={85}>
                            <button aria-label="设置"><Gear /></button>
                            <button aria-label="关闭"><CloseRound /></button>
                            <span>MA</span>
                            <Chevron />
                        </IndicatorHead>
                        <Readings items={maReadings} />
                        <RowEnd>
                            <a href="#adjust">前复权</a>
                            <button aria-label="还原"><Glyph size={13}><path d="M2 2 H9 A6 6 0 0 1 9 14 H4 M5 0 L2 2 L5 5" /></Glyph></button>
                            <button aria-label="缩小"><Glyph size={13}><circle cx="8" cy="8" r="7" /><path d="M5 8 H11" /></Glyph></button>
                            <button aria-label="放大"><Glyph size={13}><circle cx="8" cy="8" r="7" /><path d="M5 8 H11 M8 5 V11" /></Glyph></button>
                        </RowEnd>
                    </IndicatorRow>
                    <PriceChart />

                    <IndicatorRow>
                        <IndicatorHead $width={102}>
                            <button aria-label="设置"><Gear /></button>
                            <button aria-label="关闭"><CloseRound /></button>
                            <span>MACD</span>
                            <Chevron />
                        </IndicatorHead>
                        <Readings items={macdReadings} />
                    </IndicatorRow>
                    <MacdChart />
                    <Dates>
                        {dates.map(([x, label]) => <Tick key={x} style={{ left: percent(x) }}>{label}</Tick>)}
                    </Dates>
                    <HistoryStrip />

                    <StudyTabs>
                        <StudyTab>NEW0</StudyTab>
                        <StudyTab $active>MA</StudyTab>
                        <StudyTab>BOLL</StudyTab>
                        <StudyTab>EMA</StudyTab>
                        <StudyTab>SAR</StudyTab>
                        <TabDivider />
                        <StudyTab $active>MACD</StudyTab>
                        <StudyTab>KDJ</StudyTab>
                        <StudyTab>ARBR</StudyTab>
                        <StudyTab>CR</StudyTab>
                        <StudyTab>DMA</StudyTab>
                        <StudyTab>RSI</StudyTab>
                        <TabDivider />
                        <StudyTab $active>指标管理</StudyTab>
                        <StudyTab $active>时段</StudyTab>
                    </StudyTabs>
                </Main>

                <Side>
                    <SideTabs>
                        <SideTab $active>报价</SideTab>
                        <SideTab>资讯</SideTab>
                        <SideTab>评论<Dot /></SideTab>
                    </SideTabs>
                    <Quote>
                        <QuoteTitle>USDindex <span>美元指数</span></QuoteTitle>
                        <QuotePrice>
                            <strong>95.563</strong>
                            <svg width="12" height="16" viewBox="0 0 12 16" fill={RED}><path d="M6 0 L12 7 H8 V16 H4 V7 H0 Z" /></svg>
                            +0.073 +0.08%
                            <small>交易中 02/06 21:31(美东)</small>
                        </QuotePrice>
                        <QuoteTools>
                            <Chip $fill="#7080d4" aria-label="全球"><Glyph size={14}><circle cx="8" cy="8" r="6.500" /><ellipse cx="8" cy="8" rx="3" ry="6.500" /><path d="M8 1.500 V14.500 M1.500 8 H14.500" /></Glyph></Chip>
                            <Chip aria-label="笔记"><Glyph size={12}><path d="M3 1 H13 V15 L8 12 L3 15 Z" fill="currentColor" /><path d="M5 4.500 H11 M5 8 H11" stroke="#FFFFFF" strokeWidth="1.500" /></Glyph></Chip>
                            <Chip $fill="#e84f66" aria-label="自选"><Glyph size={14}><path d="M8 14 L2 8 A3.400 3.400 0 0 1 8 4 A3.400 3.400 0 0 1 14 8 Z" fill="currentColor" /></Glyph></Chip>
                            <Bell aria-label="提醒"><Glyph size={13}><path d="M8 1 A4.500 4.500 0 0 0 3.500 6 V10 L2 12 H14 L12.500 10 V6 A4.500 4.500 0 0 0 8 1 M6 14.500 H10" fill="currentColor" /></Glyph></Bell>
                            <Trade>快捷交易</Trade>
                        </QuoteTools>
                        <Stats>
                            {stats.map(([label, value, color]) => (
                                <div key={label}><dt>{label}</dt><StatValue $color={color}>{value}</StatValue></div>
                            ))}
                        </Stats>
                        <Fold aria-label="收起"><Chevron up /></Fold>
                    </Quote>

                    <SectionTitle>成分汇率</SectionTitle>
                    <Table>
                        <colgroup>
                            <col style={{ width: 70 }} /><col style={{ width: 84 }} /><col style={{ width: 66 }} /><col style={{ width: 66 }} /><col />
                        </colgroup>
                        <thead>
                            <tr><Th>代码</Th><Th>名称</Th><Th $right>最新价</Th><Th $right>涨跌幅<Chevron /></Th><Th $right>权重</Th></tr>
                        </thead>
                        <tbody>
                            {basket.map((r, i) => <RateRow key={r.code} rate={r} active={i === 0} showWeight />)}
                        </tbody>
                    </Table>

                    <SectionTitle>重要汇率</SectionTitle>
                    <Table style={{ width: 337 }}>
                        <colgroup>
                            <col style={{ width: 70 }} /><col style={{ width: 110 }} /><col style={{ width: 89 }} /><col />
                        </colgroup>
                        <thead>
                            <tr><Th>代码</Th><Th>名称</Th><Th $right>最新价</Th><Th $right>涨跌幅<Chevron /></Th></tr>
                        </thead>
                        <tbody>
                            {majors.map((r, i) => <RateRow key={r.code} rate={r} active={i === 0} />)}
                            {[1, 2, 3, 4, 5, 6].map(n => <Tr key={n}><Td /><Td /><Td /><Td /></Tr>)}
                        </tbody>
                    </Table>
                </Side>
            </Page>
        </>
    );
};

export default App;
